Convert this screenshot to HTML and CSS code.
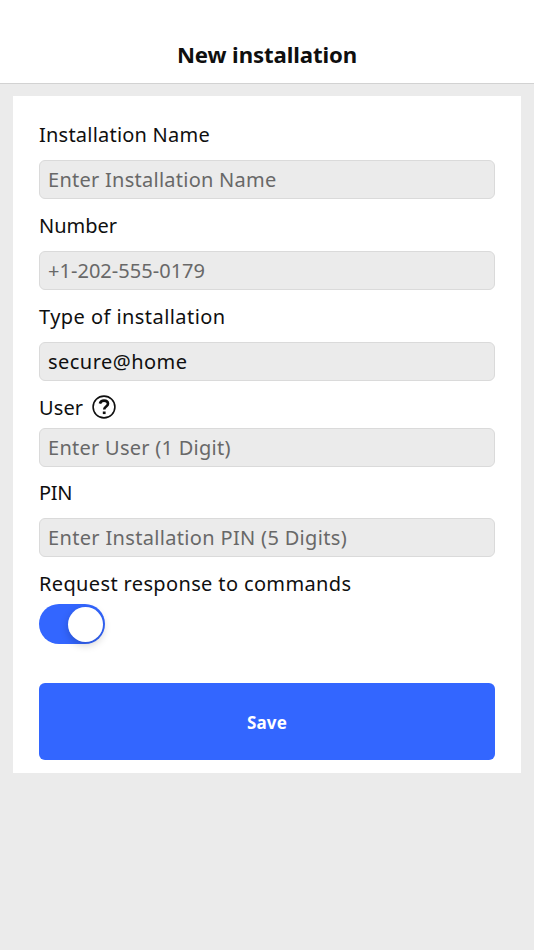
FILE: index.html
```html
<!DOCTYPE html>
<html lang="en">
<head>
<meta charset="utf-8">
<title>New installation</title>
<link rel="stylesheet" href="styles.css">
</head>
<body>
<header class="header"><h1 class="title">New installation</h1></header>
<main class="card">
<label class="label name-label" for="name">Installation Name</label>
<input class="input name" id="name" placeholder="Enter Installation Name">
<label class="label number-label" for="number">Number</label>
<input class="input number" id="number" placeholder="+1-202-555-0179">
<label class="label type-label" for="type">Type of installation</label>
<input class="input type" id="type" value="secure@home">
<label class="label user-label" for="user">User
<svg class="help" viewBox="0 0 24 24"><circle cx="12" cy="12" r="10.9"/><path class="mark" d="M7.9 8.7C8.4 6.8 9.8 5.6 12 5.6c2.4 0 4 1.2 4 3.2 0 2.7-3.8 2.7-3.8 5.7"/><path class="dot" d="M10.8 16.5h2.8v2.6h-2.8z"/></svg></label>
<input class="input" id="user" placeholder="Enter User (1 Digit)">
<label class="label pin-label" for="pin">PIN</label>
<input class="input pin" id="pin" placeholder="Enter Installation PIN (5 Digits)">
<div class="label request">Request response to commands</div>
<div class="switch" role="switch" aria-checked="true"><span class="knob"></span></div>
<button class="save">Save</button>
</main>
</body>
</html>
```
FILE: styles.css
```css
* { box-sizing: border-box; }
body { margin: 0; min-height: 950px; background: #ebebeb; color: #0f0f0f; font: 20px/24px "Noto Sans", sans-serif; }
.header { height: 84px; padding-top: 41px; background: #fff; border-bottom: 1px solid #d2d2d2; }
.title { margin: 0; text-align: center; font-size: 22.2px; line-height: 28px; font-weight: 700; letter-spacing: -.1px; }
.card { width: 508px; height: 677px; margin: 12px auto 0; padding: 12px 26px 0; background: #fff; display: flex; flex-direction: column; }
.label { height: 24px; margin: 15px 0 13px; flex: none; letter-spacing: .22px; }
.input { width: 100%; height: 39px; flex: none; margin: 0; padding: 0 8px; border: 1px solid #dadada; border-radius: 6px; background: #ebebeb; color: #0f0f0f; font: inherit; letter-spacing: .26px; outline: none; }
.input::placeholder { color: #686868; opacity: 1; }
.number-label { letter-spacing: 0; }
.number { letter-spacing: .03px; }
.type-label { letter-spacing: .44px; }
.type { letter-spacing: .46px; }
.user-label { display: flex; align-items: center; gap: 9px; margin-bottom: 8px; letter-spacing: .1px; }
.help { width: 24px; height: 24px; margin-top: -2px; fill: none; stroke: #0f0f0f; stroke-width: 1.6; }
.mark { stroke-width: 2.6; }
.dot { fill: #0f0f0f; stroke: none; }
.pin-label { margin-top: 14px; letter-spacing: -.3px; }
.pin { letter-spacing: .33px; }
.request { margin-bottom: 8px; letter-spacing: .36px; }
.switch { width: 66px; height: 40px; flex: none; padding: 2.5px; border-radius: 20px; background: #3366ff; display: flex; justify-content: flex-end; }
.knob { width: 35px; height: 35px; border-radius: 50%; background: #fff; box-shadow: 0 3px 8px #0003; }
.save { height: 77px; flex: none; margin: 39px 0 0; padding: 2px 0 0; border: 0; border-radius: 6px; background: #3366ff; color: #fff; font: 700 17px/24px "Noto Sans", sans-serif; letter-spacing: .1px; }
```
